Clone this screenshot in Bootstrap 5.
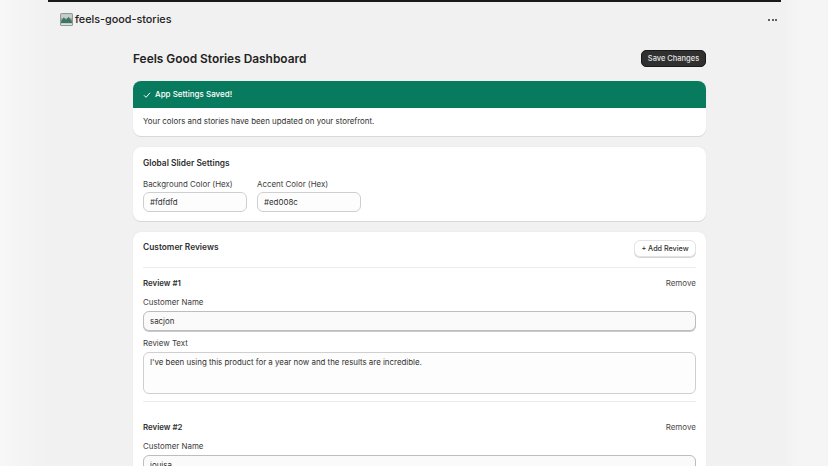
<!DOCTYPE html>
<html lang="en">
<head>
<meta charset="utf-8">
<title>Feels Good Stories</title>
<link href="https://cdn.jsdelivr.net/npm/bootstrap@5.3.0/dist/css/bootstrap.min.css" rel="stylesheet">
<style>
html,body{height:466px;overflow:hidden}
body{background:#f1f1f1;font-family:Inter,"Liberation Sans",sans-serif;color:#303030;font-size:8px;line-height:13px}
.stage{background:linear-gradient(90deg,#f7f7f7 0,#f1f1f1 48px,#f1f1f1 781px,#f5f5f5 800px);height:466px;padding:0 47px 0 48px}
.topline{height:2px;background:#1a1a1a}
.appbar{height:35px;padding:0 4px 0 12px}
.appname{font-size:10.8px;font-weight:500;color:#222}
.brand{gap:2px}
.dots{gap:1.5px}
.dots i{width:2px;height:2px;border-radius:50%;background:#303030;display:block}
.pagewrap{margin-left:85px;width:573px}
.pagehead{height:27px;margin-top:8px;margin-bottom:9px}
.pagetitle{font-size:11.9px;font-weight:600;color:#222;margin:0;line-height:16px}
.savebtn{background:#303030;color:#e4e4e4;font-size:7.5px;font-weight:500;border:1px solid #1a1a1a;border-radius:5px;padding:0;height:17px;line-height:15px;width:65px;white-space:nowrap}
.panel{background:#fff;border:0;border-radius:8px;box-shadow:0 1px 0 #d9d9d9,0 0 1px #d5d5d5;margin-bottom:11px;overflow:hidden}
.okhead{background:#087b5f;color:#fff;height:27px;padding:0 10px;font-weight:500;font-size:8px;gap:4px}
.okbody{height:28px;padding:0 10px 2px;font-size:7.9px;color:#303030}
.cardtitle{font-size:8.4px;font-weight:600;color:#303030;margin:0}
.fieldlabel{font-size:7.9px;color:#3c3c3c;display:block;margin:0 0 3px;line-height:11px}
.fieldbox{background:#fdfdfd;border:1px solid #cfcfcf;border-radius:6px;font-size:7.9px;color:#303030;padding:0 6px;height:20px;box-shadow:none}
.fieldbox:focus{box-shadow:none;border-color:#cfcfcf;background:#fdfdfd}
.namebox,.namebox:focus{border-color:#bdbdbd;background:#fafafa;box-shadow:0 1px 0 #c9c9c9}
.hexbox{width:104px}
.gap9{gap:10px}
.settings{height:74px;padding:9px 10px 0}
.settings .cardtitle{margin:2px 0 11px}
.settings .fieldlabel{margin-bottom:2px}
.reviews{padding:8px 10px 0;height:300px;margin-bottom:0;border-radius:8px 8px 0 0}
.reviewtitle{margin-top:2px}
.reviewtop{height:27px}
.addbtn{background:#fff;border:1px solid #e3e3e3;border-radius:6px;font-size:7.2px;font-weight:500;color:#303030;padding:0;width:62px;height:17px;line-height:15px;box-shadow:0 1px 0 #d5d5d5;white-space:nowrap}
.rule{border-top:1px solid #ececec;margin:0;opacity:1}
.revhead{height:13px;font-weight:600;font-size:7.9px;margin-top:9px}
.revsecond{margin-top:19px}
.removelink{color:#4c4c4c;font-size:8px;font-weight:400;text-decoration:none}
.namelabel{margin-top:7px}
.textlabel{margin-top:7px}
.textbox{height:42px;resize:none;padding:3px 6px;line-height:13px}
.rulelow{margin-top:7px}
</style>
</head>
<body>
<div class="stage">
  <div class="topline"></div>
  <div class="appbar d-flex align-items-center justify-content-between">
    <div class="brand d-flex align-items-center">
      <svg width="13" height="13" viewBox="0 0 12 12" aria-hidden="true"><rect width="12" height="12" rx="1.5" fill="#8f9a96"/><rect x="1" y="1" width="10" height="4" fill="#c6cecb"/><path d="M1 8l2.5-4 2 2.5L8 3.5 11 8v1.5H1z" fill="#3d7565"/><rect x="1" y="9.5" width="10" height="1.5" fill="#e4e8e6"/></svg>
      <span class="appname">feels-good-stories</span>
    </div>
    <div class="dots d-flex align-items-center"><i></i><i></i><i></i></div>
  </div>
  <div class="pagewrap">
    <div class="pagehead d-flex align-items-center justify-content-between">
      <h1 class="pagetitle">Feels Good Stories Dashboard</h1>
      <button type="button" class="btn savebtn">Save Changes</button>
    </div>
    <div class="panel">
      <div class="okhead d-flex align-items-center">
        <svg width="8" height="8" viewBox="0 0 8 8" aria-hidden="true"><path d="M1 4.3l2 2L7 1.8" fill="none" stroke="#fff" stroke-width="1"/></svg>
        <span>App Settings Saved!</span>
      </div>
      <div class="okbody d-flex align-items-center">Your colors and stories have been updated on your storefront.</div>
    </div>
    <div class="panel settings">
      <h2 class="cardtitle">Global Slider Settings</h2>
      <div class="d-flex gap9">
        <div class="hexbox"><label class="fieldlabel">Background Color (Hex)</label><input class="form-control fieldbox" value="#fdfdfd"></div>
        <div class="hexbox"><label class="fieldlabel">Accent Color (Hex)</label><input class="form-control fieldbox" value="#ed008c"></div>
      </div>
    </div>
    <div class="panel reviews">
      <div class="reviewtop d-flex justify-content-between align-items-start">
        <h2 class="cardtitle reviewtitle">Customer Reviews</h2>
        <button type="button" class="btn addbtn">+ Add Review</button>
      </div>
      <hr class="rule">
      <div class="revhead d-flex justify-content-between align-items-center"><span>Review #1</span><a class="removelink" href="#">Remove</a></div>
      <label class="fieldlabel namelabel">Customer Name</label>
      <input class="form-control fieldbox namebox" value="sacjon">
      <label class="fieldlabel textlabel">Review Text</label>
      <textarea class="form-control fieldbox textbox">I've been using this product for a year now and the results are incredible.</textarea>
      <hr class="rule rulelow">
      <div class="revhead revsecond d-flex justify-content-between align-items-center"><span>Review #2</span><a class="removelink" href="#">Remove</a></div>
      <label class="fieldlabel namelabel">Customer Name</label>
      <input class="form-control fieldbox namebox" value="jouisa">
    </div>
  </div>
</div>
<script src="https://cdn.jsdelivr.net/npm/bootstrap@5.3.0/dist/js/bootstrap.bundle.min.js"></script>
</body>
</html>
